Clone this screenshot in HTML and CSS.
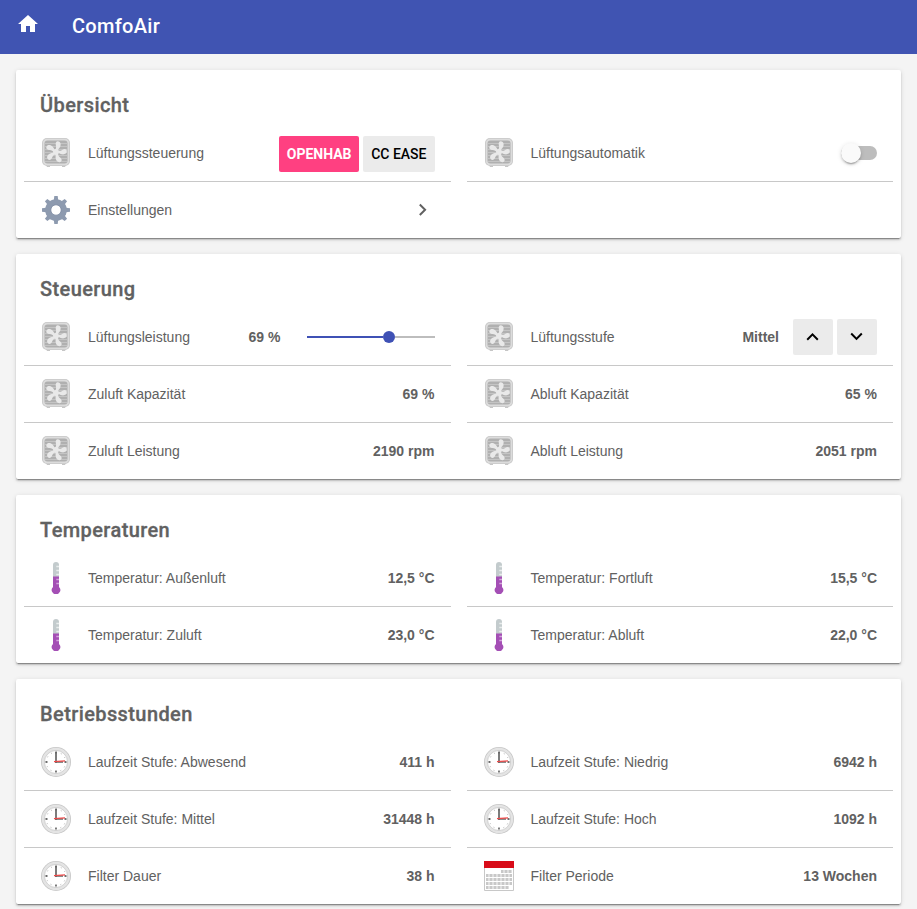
FILE: index.html
```html
<!DOCTYPE html>
<html lang="de">
<head>
<meta charset="utf-8">
<title>ComfoAir</title>
<link rel="stylesheet" href="styles.css">
</head>
<body>
<svg class="sprite" width="0" height="0" aria-hidden="true">
  <symbol id="fan" viewBox="0 0 32 32">
    <path d="M6 28h4v2H7zM22 28h4l-1 2h-3z" fill="#c6c6c6"/>
    <rect x="2" y="1" width="28" height="28" rx="5" fill="#c8c8c8"/>
    <rect x="2.800" y="1.800" width="26.400" height="26.400" rx="4.300" fill="#dcdcdc"/>
    <rect x="4.500" y="3.500" width="23" height="23" rx="3" fill="#b0b0b0"/>
    <path d="M5 6.500h22M5 9.500h22M5 12.500h22M5 15.500h22M5 18.500h22M5 21.500h22M5 24.500h22" stroke="#c4c4c4"/>
    <g fill="#e9e9e9">
      <path id="blade" d="M14.600 13.500c1.600-1.800 1.700-3.400 1.300-5-.8-2.800.5-4.600 2.600-4.100 2.400.6 2.700 3.600 1.400 5.900-1.100 1.900-2.700 3-4.200 4.400z"/>
      <use href="#blade" transform="rotate(72 16 15)"/>
      <use href="#blade" transform="rotate(144 16 15)"/>
      <use href="#blade" transform="rotate(216 16 15)"/>
      <use href="#blade" transform="rotate(288 16 15)"/>
      <circle cx="16" cy="15" r="2.900"/>
    </g>
  </symbol>
  <symbol id="gear" viewBox="0 0 32 32">
    <g fill="#8d9aaf">
      <path id="tooth" d="M13.800 6 14.300 2h3.400l.5 4v20l-.5 4h-3.400l-.5-4z"/>
      <use href="#tooth" transform="rotate(45 16 16)"/>
      <use href="#tooth" transform="rotate(90 16 16)"/>
      <use href="#tooth" transform="rotate(135 16 16)"/>
      <circle cx="16" cy="16" r="10.800"/>
    </g>
    <circle cx="16" cy="16" r="5.200" fill="#fff" stroke="#79879f" stroke-width=".8"/>
  </symbol>
  <symbol id="thermo" viewBox="0 0 32 32">
    <path d="M13 15V3q0-3 3-3t3 3v12z" fill="#c3cbcd"/>
    <path d="M13 14.500h6V25a4.200 4.200 0 1 1-6 0z" fill="#a44fb5"/>
    <path d="M16.300 4.500H19M16.300 8.500H19M16.300 12.500H19" stroke="#e9eded" stroke-width="1.300"/>
    <path d="M16.300 17.500H19M16.300 21.500H19" stroke="#d3a5dc" stroke-width="1.300"/>
  </symbol>
  <symbol id="clock" viewBox="0 0 32 32">
    <circle cx="16" cy="16" r="15" fill="#c6c6c6"/>
    <circle cx="16" cy="16" r="14.200" fill="#e4e4e4"/>
    <circle cx="16" cy="16" r="11.600" fill="#fff" stroke="#c6c6c6" stroke-width=".8"/>
    <circle cx="16" cy="16" r="9.800" fill="none" stroke="#999" stroke-width="1" stroke-dasharray=".8 4.331" stroke-dashoffset=".4"/>
    <path d="M16 5.500v2M16 24.500v2M5.500 16h2M24.500 16h2" stroke="#444" stroke-width="1.300"/>
    <path d="M16 6v11M15 16h8" stroke="#666" stroke-width="1.700"/>
    <path d="M14 15.700l11-.900" stroke="#ef4b4b" stroke-width="1.300"/>
  </symbol>
  <symbol id="calendar" viewBox="0 0 32 32">
    <path d="M1.500 7h29v23.500h-29z" fill="#fff" stroke="#c8c8c8"/>
    <path d="M1 1h30v7H1z" fill="#d80b18"/>
    <g fill="none" stroke="#dfdfdf" stroke-width="3">
      <path d="M18 11.500h11M3 15.500h26M3 19.500h26M3 23.500h26M3 27.500h23"/>
      <path d="M18 11.500h11M3 15.500h26M3 19.500h26M3 23.500h26M3 27.500h23" stroke="#c8c8c8" stroke-dasharray="2 2"/>
    </g>
  </symbol>
</svg>

<header class="header">
  <svg class="home" viewBox="0 0 24 24"><path d="M10 20v-6h4v6h5v-8h3L12 3 2 12h3v8z" fill="#fff"/></svg>
  <h1 class="header-title">ComfoAir</h1>
</header>

<main class="page">
  <section class="card">
    <h2 class="card-title">Übersicht</h2>
    <div class="grid">
      <div class="row"><svg class="icon"><use href="#fan"/></svg><span class="label">Lüftungssteuerung</span>
        <div class="buttons buttons-choice"><button class="button button-accent">OPENHAB</button><button class="button">CC EASE</button></div></div>
      <div class="row"><svg class="icon"><use href="#fan"/></svg><span class="label">Lüftungsautomatik</span>
        <span class="switch"><span class="switch-thumb"></span></span></div>
      <div class="row"><svg class="icon"><use href="#gear"/></svg><span class="label">Einstellungen</span>
        <svg class="chevron" viewBox="0 0 24 24"><path d="M8.090 16.340l4.580-4.590-4.580-4.590L9.500 5.750l6 6-6 6z" fill="#616161"/></svg></div>
    </div>
  </section>

  <section class="card">
    <h2 class="card-title">Steuerung</h2>
    <div class="grid">
      <div class="row"><svg class="icon"><use href="#fan"/></svg><span class="label">Lüftungsleistung</span><span class="value">69 %</span>
        <span class="slider"><span class="slider-fill"></span><span class="slider-thumb"></span><span class="slider-rest"></span></span></div>
      <div class="row"><svg class="icon"><use href="#fan"/></svg><span class="label">Lüftungsstufe</span><span class="value value-step">Mittel</span>
        <div class="buttons">
          <button class="button button-step" aria-label="Höher"><svg viewBox="0 0 24 24"><path d="M6.910 15.410L11.500 10.830l4.590 4.580L17.500 14l-6-6-6 6z"/></svg></button>
          <button class="button button-step" aria-label="Niedriger"><svg viewBox="0 0 24 24"><path d="M6.910 7.840L11.500 12.420l4.590-4.580L17.500 9.250l-6 6-6-6z"/></svg></button>
        </div></div>
      <div class="row"><svg class="icon"><use href="#fan"/></svg><span class="label">Zuluft Kapazität</span><span class="value">69 %</span></div>
      <div class="row"><svg class="icon"><use href="#fan"/></svg><span class="label">Abluft Kapazität</span><span class="value">65 %</span></div>
      <div class="row"><svg class="icon"><use href="#fan"/></svg><span class="label">Zuluft Leistung</span><span class="value">2190 rpm</span></div>
      <div class="row"><svg class="icon"><use href="#fan"/></svg><span class="label">Abluft Leistung</span><span class="value">2051 rpm</span></div>
    </div>
  </section>

  <section class="card">
    <h2 class="card-title">Temperaturen</h2>
    <div class="grid">
      <div class="row"><svg class="icon"><use href="#thermo"/></svg><span class="label">Temperatur: Außenluft</span><span class="value">12,5 °C</span></div>
      <div class="row"><svg class="icon"><use href="#thermo"/></svg><span class="label">Temperatur: Fortluft</span><span class="value">15,5 °C</span></div>
      <div class="row"><svg class="icon"><use href="#thermo"/></svg><span class="label">Temperatur: Zuluft</span><span class="value">23,0 °C</span></div>
      <div class="row"><svg class="icon"><use href="#thermo"/></svg><span class="label">Temperatur: Abluft</span><span class="value">22,0 °C</span></div>
    </div>
  </section>

  <section class="card">
    <h2 class="card-title">Betriebsstunden</h2>
    <div class="grid">
      <div class="row"><svg class="icon"><use href="#clock"/></svg><span class="label">Laufzeit Stufe: Abwesend</span><span class="value">411 h</span></div>
      <div class="row"><svg class="icon"><use href="#clock"/></svg><span class="label">Laufzeit Stufe: Niedrig</span><span class="value">6942 h</span></div>
      <div class="row"><svg class="icon"><use href="#clock"/></svg><span class="label">Laufzeit Stufe: Mittel</span><span class="value">31448 h</span></div>
      <div class="row"><svg class="icon"><use href="#clock"/></svg><span class="label">Laufzeit Stufe: Hoch</span><span class="value">1092 h</span></div>
      <div class="row"><svg class="icon"><use href="#clock"/></svg><span class="label">Filter Dauer</span><span class="value">38 h</span></div>
      <div class="row"><svg class="icon"><use href="#calendar"/></svg><span class="label">Filter Periode</span><span class="value">13 Wochen</span></div>
    </div>
  </section>
</main>
</body>
</html>
```
FILE: styles.css
```css
* { box-sizing: border-box; }

body {
  margin: 0;
  background: #f4f4f4;
  color: #616161;
  font-family: "Liberation Sans", Arial, sans-serif;
  font-size: 14px;
}

.sprite { display: block; }

.header {
  display: flex;
  align-items: center;
  height: 54px;
  padding: 0 16px 2px;
  background: #4054b2;
  color: #fff;
}

.home { width: 24px; height: 24px; margin: 0 32px 5px 0; }

.header-title {
  margin: 0;
  font: 500 20px/24px Roboto, sans-serif;
  letter-spacing: .3px;
}

.page {
  display: flex;
  flex-direction: column;
  gap: 16px;
  padding: 16px 16px 5px;
}

.card {
  padding: 0 8px;
  background: #fff;
  border-radius: 2px;
  box-shadow: 0 2px 2px 0 rgba(0, 0, 0, .14), 0 3px 1px -2px rgba(0, 0, 0, .2), 0 1px 5px 0 rgba(0, 0, 0, .12), 0 1px 0 0 rgba(0, 0, 0, .12);
}

.card-title {
  height: 55px;
  margin: 0;
  padding: 23px 16px 0;
  font: 500 20px/24px Roboto, sans-serif;
  letter-spacing: .4px;
  -webkit-text-stroke: .3px #616161;
}

.grid {
  display: grid;
  grid-template-columns: 1fr 1fr;
  column-gap: 16px;
}

.row {
  display: flex;
  align-items: center;
  height: 57px;
  padding: 0 16px;
  border-bottom: 1px solid #c8c8c8;
}

.row:nth-child(odd):nth-last-child(-n+2),
.row:nth-child(odd):nth-last-child(-n+2) + .row {
  height: 56px;
  border-bottom: 0;
}

.icon { width: 32px; height: 32px; margin-right: 16px; flex: none; }

.label { flex: 1; white-space: nowrap; }

.value { font-weight: 700; white-space: nowrap; }

.value-step { margin-right: 14px; }

.buttons { display: flex; gap: 4px; }

.buttons-choice { padding-top: 2px; }

.button {
  height: 36px;
  padding: 0 8px;
  border: 0;
  border-radius: 2px;
  background: #ebebeb;
  color: #000;
  font: 500 14px/36px Roboto, sans-serif;
}

.button-accent { width: 80px; padding: 0; background: #ff4081; color: #fff; font-weight: 700; }

.button-step { display: flex; align-items: center; justify-content: center; width: 40px; }

.button-step svg { width: 24px; height: 24px; flex: none; }

.chevron { width: 24px; height: 24px; }

.switch {
  position: relative;
  width: 36px;
  height: 14px;
  border-radius: 7px;
  background: #bdbdbd;
}

.switch-thumb {
  position: absolute;
  top: -3px;
  left: 0;
  width: 20px;
  height: 20px;
  border-radius: 50%;
  background: #fafafa;
  box-shadow: 0 2px 2px 0 rgba(0, 0, 0, .14), 0 3px 1px -2px rgba(0, 0, 0, .2), 0 1px 5px 0 rgba(0, 0, 0, .12);
}

.slider { display: flex; align-items: center; width: 128px; margin-left: 26px; }

.slider-fill { width: 76px; height: 2px; background: #3f51b5; }

.slider-thumb { width: 12px; height: 12px; border-radius: 50%; background: #3f51b5; }

.slider-rest { flex: 1; height: 2px; background: #bdbdbd; }
```
